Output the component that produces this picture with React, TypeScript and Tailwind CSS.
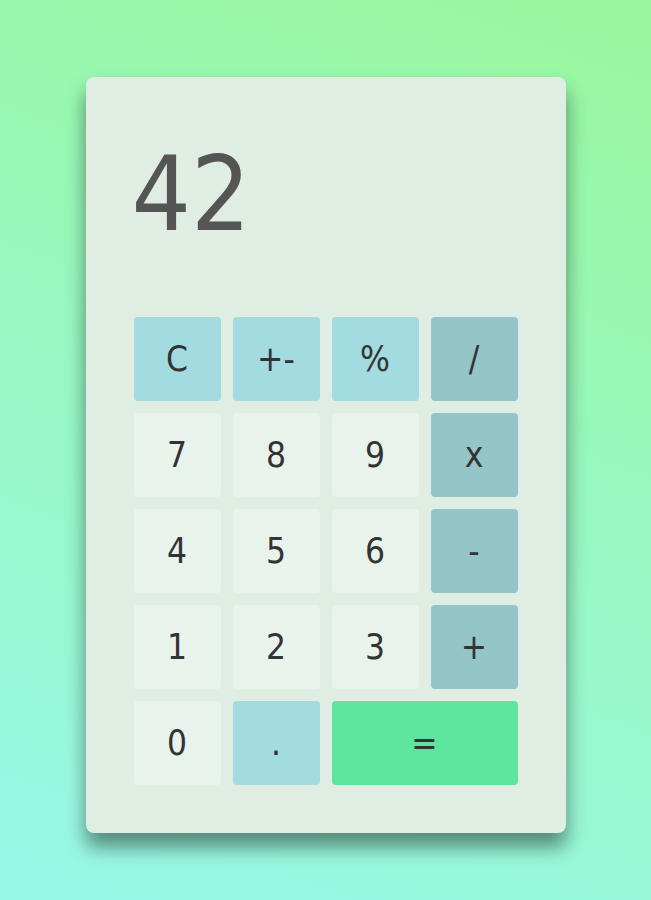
import React, { useState } from 'react';

type Key = { label: string; kind: 'fn' | 'op' | 'num' | 'eq'; wide?: boolean };

const keys: Key[] = [
  { label: 'C', kind: 'fn' },
  { label: '+-', kind: 'fn' },
  { label: '%', kind: 'fn' },
  { label: '/', kind: 'op' },
  { label: '7', kind: 'num' },
  { label: '8', kind: 'num' },
  { label: '9', kind: 'num' },
  { label: 'x', kind: 'op' },
  { label: '4', kind: 'num' },
  { label: '5', kind: 'num' },
  { label: '6', kind: 'num' },
  { label: '-', kind: 'op' },
  { label: '1', kind: 'num' },
  { label: '2', kind: 'num' },
  { label: '3', kind: 'num' },
  { label: '+', kind: 'op' },
  { label: '0', kind: 'num' },
  { label: '.', kind: 'fn' },
  { label: '=', kind: 'eq', wide: true },
];

const kindClass = {
  fn: 'bg-[#a2dbe0]',
  op: 'bg-[#94c5c9]',
  num: 'bg-[#e8f3ec]',
  eq: 'bg-[#5ee69e]',
};

export default function App() {
  const [display] = useState('42');

  return (
    <div className="min-h-[900px] w-full bg-[linear-gradient(200deg,#98f89d,#98f8e8)] flex justify-center pt-[77px] font-['DejaVu_Sans_Condensed','DejaVu_Sans',sans-serif] font-stretch-condensed">
      <div className="w-[480px] h-[756px] bg-[#dfede2] rounded-lg shadow-[0_14px_20px_rgba(0,0,0,0.45)] p-12 flex flex-col">
        <div className="h-[180px] mb-3 flex items-start">
          <span className="text-[104px] leading-none text-[#555555] mt-[17px] -ml-0.5">{display}</span>
        </div>
        <div className="grid grid-cols-4 gap-3">
          {keys.map((k) => (
            <button
              key={k.label}
              className={`h-[84px] rounded-[4px] text-[35px] text-[#333333] flex items-center justify-center ${kindClass[k.kind]} ${k.wide ? 'col-span-2' : ''}`}
            >
              {k.label}
            </button>
          ))}
        </div>
      </div>
    </div>
  );
}
